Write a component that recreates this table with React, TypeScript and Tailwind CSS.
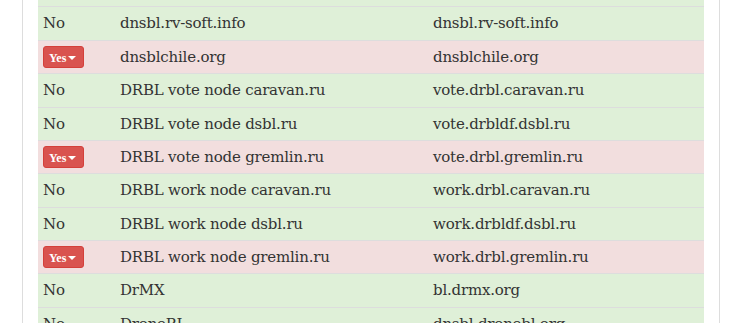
import React from 'react'

type Row = { listed: boolean; name: string; host: string; h: string }

const rows: Row[] = [
  { listed: false, name: 'dnsbl.rv-soft.info', host: 'dnsbl.rv-soft.info', h: 'h-[34px]' },
  { listed: true, name: 'dnsblchile.org', host: 'dnsblchile.org', h: 'h-[33px]' },
  { listed: false, name: 'DRBL vote node caravan.ru', host: 'vote.drbl.caravan.ru', h: 'h-[34px]' },
  { listed: false, name: 'DRBL vote node dsbl.ru', host: 'vote.drbldf.dsbl.ru', h: 'h-[33px]' },
  { listed: true, name: 'DRBL vote node gremlin.ru', host: 'vote.drbl.gremlin.ru', h: 'h-[33px]' },
  { listed: false, name: 'DRBL work node caravan.ru', host: 'work.drbl.caravan.ru', h: 'h-[34px]' },
  { listed: false, name: 'DRBL work node dsbl.ru', host: 'work.drbldf.dsbl.ru', h: 'h-[33px]' },
  { listed: true, name: 'DRBL work node gremlin.ru', host: 'work.drbl.gremlin.ru', h: 'h-[33px]' },
  { listed: false, name: 'DrMX', host: 'bl.drmx.org', h: 'h-[34px]' },
  { listed: false, name: 'DroneBL', host: 'dnsbl.dronebl.org', h: 'h-[34px]' },
]

function YesButton() {
  return (
    <button className="flex items-center gap-[2px] h-[22px] w-[41px] pl-[5px] pt-[1px] rounded-[3px] bg-[#d9534f] border border-[#d43f3a] text-white font-['Liberation_Serif',serif] text-[12px] font-bold leading-none tracking-normal">
      Yes
      <span className="w-0 h-0 border-x-[4px] border-x-transparent border-t-[4px] border-t-white" />
    </button>
  )
}

export default function App() {
  return (
    <div className="h-[323px] overflow-hidden bg-white font-[family-name:'DejaVu_Serif',serif] text-[15px] tracking-[-0.2px] text-[#333]">
      <div className="ml-[22px] w-[698px] border-x border-[#ddd] px-[15px]">
        <div className="h-[6px] bg-[#dff0d8]" />
        {rows.map((r) => (
          <div
            key={r.host}
            className={`flex items-center border-t border-[#ddd] ${r.h} ${r.listed ? 'bg-[#f2dede]' : 'bg-[#dff0d8]'}`}
          >
            <div className="w-[82px] pl-[5px]">{r.listed ? <YesButton /> : 'No'}</div>
            <div className="w-[313px]">{r.name}</div>
            <div className="flex-1">{r.host}</div>
          </div>
        ))}
      </div>
    </div>
  )
}
